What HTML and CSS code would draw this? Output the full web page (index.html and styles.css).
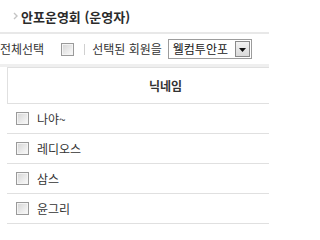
FILE: index.html
```html
<!DOCTYPE html>
<html lang="ko">
<head>
<meta charset="utf-8">
<link rel="stylesheet" href="styles.css">
</head>
<body>
<div class="page">
  <div class="title">
    <svg class="arrow" width="5" height="8" viewBox="0 0 5 8"><polyline points="1,1 4,4 1,7" fill="none" stroke="#c4c4c4" stroke-width="1.4"/></svg>
    <span>안포운영회 (운영자)</span>
  </div>
  <div class="toolbar">
    <span class="label">전체선택</span>
    <span class="chk chk-all"></span>
    <span class="sep"></span>
    <span class="label">선택된 회원을</span>
    <div class="select">
      <span class="select-text">웰컴투안포</span>
      <span class="select-btn"><svg width="7" height="4" viewBox="0 0 7 4"><polygon points="0,0 7,0 3.5,4" fill="#111"/></svg></span>
    </div>
  </div>
  <div class="table">
    <div class="thead">닉네임</div>
    <div class="row"><span class="chk"></span><span class="name">나야~</span></div>
    <div class="row"><span class="chk"></span><span class="name">레디오스</span></div>
    <div class="row"><span class="chk"></span><span class="name">삼스</span></div>
    <div class="row"><span class="chk"></span><span class="name">윤그리</span></div>
  </div>
</div>
</body>
</html>
```
FILE: styles.css
```css
html, body {
  margin: 0;
  padding: 0;
  background: #fff;
  overflow: hidden;
}
body {
  font-family: "Noto Sans CJK KR", "Noto Sans", sans-serif;
  font-size: 12px;
  color: #333;
}
.page {
  width: 269px;
  height: 233px;
  overflow: hidden;
}
.title {
  height: 32px;
  display: flex;
  align-items: center;
  padding-left: 13px;
  gap: 3px;
  font-weight: bold;
  font-size: 13px;
  color: #2b2b2b;
}
.arrow {
  display: block;
}
.toolbar {
  border-top: 2px solid #e8e8e8;
  border-bottom: 3px solid #efefef;
  height: 30px;
  display: flex;
  align-items: center;
  white-space: nowrap;
  color: #333;
}
.toolbar .label {
  line-height: 14px;
}
.chk {
  display: inline-block;
  box-sizing: border-box;
  width: 13px;
  height: 13px;
  border: 1px solid #9a9a9a;
  background: linear-gradient(135deg, #d4d4d4 0%, #ececec 60%, #fafafa 100%);
  box-shadow: inset 0 0 0 1px #f4f4f4;
  flex: none;
}
.chk-all {
  margin-left: 17px;
}
.sep {
  display: inline-block;
  width: 1px;
  height: 11px;
  background: #d0d0d0;
  margin: 0 7px 0 10px;
}
.select {
  margin-left: 6px;
  box-sizing: border-box;
  width: 84px;
  height: 20px;
  border: 1px solid #9c9c9c;
  display: flex;
  align-items: center;
  justify-content: space-between;
  padding: 0 1px 0 4px;
}
.select-text {
  line-height: 14px;
  color: #222;
}
.select-btn {
  box-sizing: border-box;
  width: 15px;
  height: 16px;
  border: 1px solid #8a8a8a;
  background: linear-gradient(#f2f2f2, #dadada);
  display: flex;
  align-items: center;
  justify-content: center;
}
.select-btn svg {
  display: block;
  margin-top: 1px;
}
.table {
  margin-left: 7px;
  width: 316px;
}
.thead {
  border-top: 1px solid #e0e0e0;
  border-left: 1px solid #e0e0e0;
  border-bottom: 1px solid #e0e0e0;
  height: 35px;
  display: flex;
  align-items: center;
  justify-content: center;
  font-weight: bold;
  color: #333;
}
.row {
  height: 29px;
  border-bottom: 1px solid #e0e0e0;
  display: flex;
  align-items: center;
  padding-left: 9px;
  gap: 8px;
}
.name {
  color: #333;
  line-height: 14px;
}
```
